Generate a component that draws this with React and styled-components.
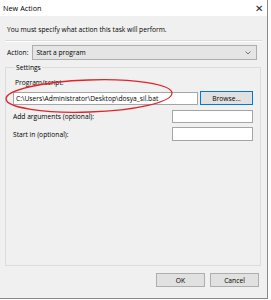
import React from 'react'
import styled, { createGlobalStyle } from 'styled-components'

const Global = createGlobalStyle`
  html, body {
    margin: 0;
    padding: 0;
    background: #ffffff;
  }
  body {
    font-family: "Open Sans", "Noto Sans", sans-serif;
    font-size: 6.7px;
    color: #000;
  }
`

const Window = styled.div`
  width: 267px;
  height: 298px;
  border-right: 1px solid #8a8a8a;
  border-bottom: 1px solid #8a8a8a;
  background: #f0f0f0;
  display: flex;
  flex-direction: column;
  box-sizing: content-box;
`

const TitleBar = styled.div`
  height: 16px;
  background: #ffffff;
  display: flex;
  align-items: center;
  justify-content: space-between;
  padding: 0 4px 0 3px;
  font-size: 7.3px;
`

const Close = styled.span`
  font-size: 10px;
  line-height: 1;
  color: #222;
`

const Body = styled.div`
  flex: 1;
  display: flex;
  flex-direction: column;
  padding: 0 5px;
`

const Intro = styled.div`
  height: 22px;
  padding: 0 2px;
  display: flex;
  align-items: center;
  margin-top: 2px;
  border-bottom: 1px solid #dadada;
  box-shadow: 0 1px 0 #ffffff;
`

const ActionRow = styled.div`
  display: flex;
  align-items: center;
  margin-top: 4px;
  padding-left: 2px;
  gap: 4px;
`

const Label = styled.span`
  white-space: nowrap;
`

const Combo = styled.div`
  flex: 1;
  height: 13px;
  margin-right: 5px;
  background: #e5e5e5;
  border: 1px solid #adadad;
  display: flex;
  align-items: center;
  justify-content: space-between;
  padding: 0 5px 0 3px;
`

const Group = styled.fieldset`
  position: relative;
  margin: 3px 1px 0 0;
  padding: 5px 7px 0 7px;
  height: 203px;
  border: 1px solid #dcdcdc;
  box-sizing: border-box;
  min-width: 0;
`

const Legend = styled.legend`
  padding: 0 1px;
  margin-left: 2px;
`

const FieldLabel = styled.div`
  height: 10px;
  display: flex;
  align-items: center;
  margin-left: 2px;
`

const Row = styled.div`
  display: flex;
  align-items: center;
  justify-content: space-between;
  margin-top: ${p => p.$top || 4}px;
`

const Input = styled.div`
  box-sizing: border-box;
  width: ${p => p.$w}px;
  height: ${p => p.$h || 13}px;
  background: #ffffff;
  border: 1px solid #a5a5a5;
  display: flex;
  align-items: center;
  padding-left: 2px;
  white-space: nowrap;
  overflow: hidden;
`

const Button = styled.div`
  box-sizing: border-box;
  width: ${p => p.$w || 50}px;
  height: 14px;
  background: #e1e1e1;
  border: 1px solid ${p => (p.$focus ? '#0078d7' : '#adadad')};
  display: flex;
  align-items: center;
  justify-content: center;
`

const Footer = styled.div`
  display: flex;
  justify-content: flex-end;
  gap: 5px;
  padding: 7px 3px 0 0;
`

const Ring = styled.svg`
  position: absolute;
  left: -2px;
  top: 6px;
  overflow: visible;
  pointer-events: none;
`

const Chevron = () => (
  <svg width="6" height="4" viewBox="0 0 6 4">
    <path d="M0.5 0.5 L3 3 L5.5 0.5" fill="none" stroke="#555" strokeWidth="0.8" />
  </svg>
)

export default function App() {
  return (
    <>
      <Global />
      <Window>
        <TitleBar>
          <span>New Action</span>
          <Close>✕</Close>
        </TitleBar>
        <Body>
          <Intro>You must specify what action this task will perform.</Intro>
          <ActionRow>
            <Label>Action:</Label>
            <Combo>
              <span>Start a program</span>
              <Chevron />
            </Combo>
          </ActionRow>
          <Group>
            <Legend>Settings</Legend>
            <FieldLabel>Program/script:</FieldLabel>
            <Row $top={4}>
              <Input $w={185}>C:\Users\Administrator\Desktop\dosya_sil.bat</Input>
              <Button $w={53} $focus>Browse...</Button>
            </Row>
            <Row $top={5}>
              <Label>Add arguments (optional):</Label>
              <Input $w={81} />
            </Row>
            <Row $top={4}>
              <Label>Start in (optional):</Label>
              <Input $w={81} $h={14} />
            </Row>
            <Ring width="170" height="36" viewBox="0 0 170 36">
              <ellipse cx="85" cy="18" rx="83" ry="16" fill="none" stroke="#e2242a" strokeWidth="1.3" transform="rotate(-2 85 18)" />
            </Ring>
          </Group>
          <Footer>
            <Button $w={49}>OK</Button>
            <Button $w={49}>Cancel</Button>
          </Footer>
        </Body>
      </Window>
    </>
  )
}
